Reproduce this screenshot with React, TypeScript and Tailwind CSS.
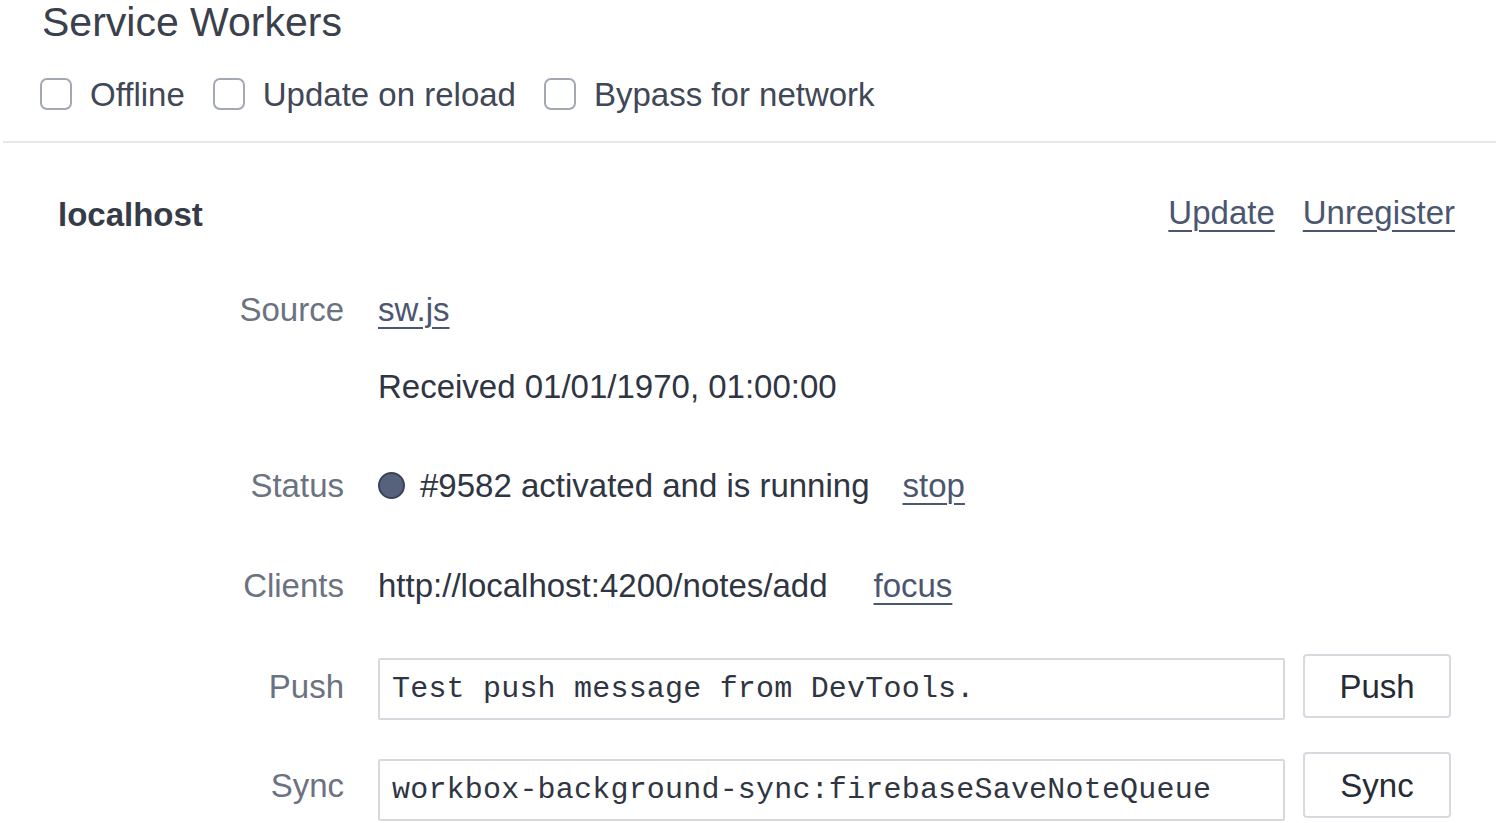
import React from "react";

const SANS = "font-['Liberation_Sans',Arial,sans-serif]";
const MONO = "font-['Liberation_Mono','Courier_New',monospace]";

function Check({ label }: { label: string }) {
  return (
    <label className="flex items-center gap-[18px]">
      <span className="block w-[32px] h-[32px] rounded-[7px] border-2 border-[#a3a8b3] bg-white" />
      <span className="text-[33px] text-[#404756] leading-none">{label}</span>
    </label>
  );
}

function Row({
  label,
  className,
  children,
}: {
  label: string;
  className: string;
  children: React.ReactNode;
}) {
  return (
    <div className={`flex items-center ${className}`}>
      <div className="w-[344px] shrink-0 text-right text-[33px] text-[#6b7280] leading-none">
        {label}
      </div>
      <div className="ml-[34px] flex flex-1 items-center text-[33px] text-[#2f3542] leading-none">
        {children}
      </div>
    </div>
  );
}

function Link({ children }: { children: React.ReactNode }) {
  return (
    <span className="text-[#4b5670] underline decoration-2 underline-offset-[6px]">
      {children}
    </span>
  );
}

export default function App() {
  return (
    <div className={`w-[1499px] h-[823px] overflow-hidden bg-white ${SANS}`}>
      <div className="h-[44px] pl-[42px] flex items-center text-[41px] text-[#3a404c] leading-none">
        Service Workers
      </div>

      <div className="mt-[28px] h-[44px] pl-[40px] flex items-center gap-[28px]">
        <Check label="Offline" />
        <Check label="Update on reload" />
        <Check label="Bypass for network" />
      </div>

      <div className="mt-[25px] mx-[3px] h-[2px] bg-[#e6e7ea]" />

      <div className="mt-[41px] h-[60px] pl-[58px] pr-[44px] flex items-center justify-between">
        <span className="text-[33px] font-bold text-[#353b47] leading-none">localhost</span>
        <div className="flex items-center gap-[28px] text-[33px] leading-none -mt-[4px]">
          <Link>Update</Link>
          <Link>Unregister</Link>
        </div>
      </div>

      <Row label="Source" className="mt-[35px] h-[60px]">
        <Link>sw.js</Link>
      </Row>

      <Row label="" className="mt-[17px] h-[60px]">
        <span>Received 01/01/1970, 01:00:00</span>
      </Row>

      <Row label="Status" className="mt-[39px] h-[60px]">
        <span className="block w-[27px] h-[27px] rounded-full bg-[#56627b] border-2 border-[#3a4458]" />
        <span className="ml-[15px]">#9582 activated and is running</span>
        <span className="ml-[33px]">
          <Link>stop</Link>
        </span>
      </Row>

      <Row label="Clients" className="mt-[40px] h-[60px]">
        <span>http://localhost:4200/notes/add</span>
        <span className="ml-[46px]">
          <Link>focus</Link>
        </span>
      </Row>

      <Row label="Push" className="mt-[38px] h-[66px] pr-[48px]">
        <div
          className={`h-[62px] w-[907px] mt-[6px] border-2 border-[#d7d9de] rounded-[2px] flex items-center pl-[12px] text-[30px] tracking-[0.2px] text-[#2f3542] ${MONO}`}
        >
          Test push message from DevTools.
        </div>
        <button className="ml-[18px] h-[64px] w-[148px] border-2 border-[#d7d9de] rounded-[4px] text-[33px] text-[#262b35] bg-white">
          Push
        </button>
      </Row>

      <Row label="Sync" className="mt-[32px] h-[68px] pr-[48px]">
        <div
          className={`h-[62px] w-[907px] mt-[10px] border-2 border-[#d7d9de] rounded-[2px] flex items-center pl-[12px] text-[30px] tracking-[0.2px] text-[#2f3542] ${MONO}`}
        >
          workbox-background-sync:firebaseSaveNoteQueue
        </div>
        <button className="ml-[18px] h-[66px] w-[148px] border-2 border-[#d7d9de] rounded-[4px] text-[33px] text-[#262b35] bg-white">
          Sync
        </button>
      </Row>
    </div>
  );
}
